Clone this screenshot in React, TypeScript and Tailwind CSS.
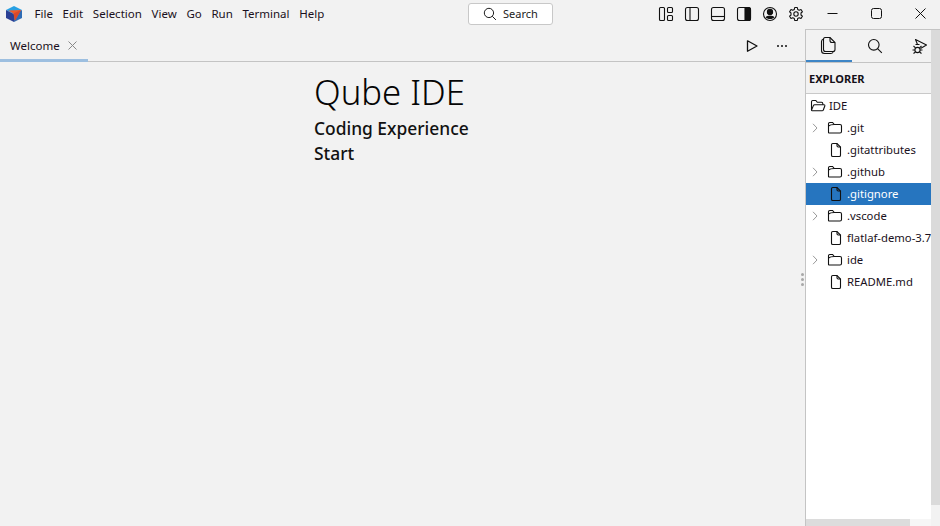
import React from "react";

const S = ({ children, w = 16, h = 16, vb = "0 0 16 16" }: { children: React.ReactNode; w?: number; h?: number; vb?: string }) => (
  <svg width={w} height={h} viewBox={vb} fill="none" stroke="#111" strokeWidth={1.1} className="block shrink-0">
    {children}
  </svg>
);

const Logo = () => (
  <svg width="18" height="18" viewBox="0 0 18 18" className="block">
    <path d="M9 1 L17 5 L9 9 L1 5 Z" fill="#27a0e3" />
    <path d="M1 5 L9 9 L9 17 L1 13 Z" fill="#2b3f94" />
    <path d="M17 5 L9 9 L9 17 L17 13 Z" fill="#2f6cb5" />
    <path d="M3.5 5.5 L16 5 L10 15.5 L8.5 8.5 Z" fill="#ef5a2a" />
    <path d="M8.5 8.5 L10 15.5 L16 5 Z" fill="#d9482a" />
  </svg>
);

const FolderIcon = () => (
  <S w={16} h={16}>
    <path d="M1.5 12.5 V3.8 C1.5 3 2 2.5 2.8 2.5 H5.6 L7.3 4.5 H13 C13.8 4.5 14.5 5.1 14.5 6 V11.5 C14.5 12.4 13.8 13 13 13 H2 C1.7 13 1.5 12.8 1.5 12.5 Z" />
    <path d="M1.5 6 C3 4.8 5 4.5 7.3 4.5" />
  </S>
);

const OpenFolderIcon = () => (
  <S w={16} h={16}>
    <path d="M1.5 12 V3.8 C1.5 3 2 2.5 2.8 2.5 H5.8 L7.3 4.3 H11.5 C12.2 4.3 12.8 4.8 12.8 5.6 V6.8" />
    <path d="M1.5 12 L3.4 7.6 C3.6 7.1 4 6.8 4.6 6.8 H14 C14.6 6.8 15 7.4 14.8 8 L13.4 11.8 C13.2 12.4 12.7 12.8 12.1 12.8 H2.3 C1.8 12.8 1.5 12.5 1.5 12 Z" />
  </S>
);

const FileIcon = () => (
  <S w={16} h={16}>
    <path d="M3.5 2.8 C3.5 2 4 1.5 4.8 1.5 H9 L12.5 5 V13.2 C12.5 14 12 14.5 11.2 14.5 H4.8 C4 14.5 3.5 14 3.5 13.2 Z" />
    <path d="M9 1.5 V3.8 C9 4.5 9.5 5 10.2 5 H12.5" />
  </S>
);

const Chevron = () => (
  <svg width="8" height="10" viewBox="0 0 8 10" fill="none" stroke="#9a9a9a" strokeWidth={1} className="block shrink-0">
    <path d="M2 0.8 L6 5 L2 9.2" />
  </svg>
);

const SearchIcon = ({ size = 16 }: { size?: number }) => (
  <svg width={size} height={size} viewBox="0 0 16 16" fill="none" stroke="#111" strokeWidth={1.1} className="block shrink-0">
    <circle cx="6.8" cy="6.8" r="5.3" />
    <path d="M10.6 10.6 L14.8 14.8" />
  </svg>
);

const menus = ["File", "Edit", "Selection", "View", "Go", "Run", "Terminal", "Help"];

type Row = { name: string; type: "root" | "folder" | "file"; selected?: boolean };
const rows: Row[] = [
  { name: "IDE", type: "root" },
  { name: ".git", type: "folder" },
  { name: ".gitattributes", type: "file" },
  { name: ".github", type: "folder" },
  { name: ".gitignore", type: "file", selected: true },
  { name: ".vscode", type: "folder" },
  { name: "flatlaf-demo-3.7.jar", type: "file" },
  { name: "ide", type: "folder" },
  { name: "README.md", type: "file" },
];

export default function App() {
  return (
    <div
      className="flex h-[526px] w-[940px] flex-col overflow-hidden bg-[#f2f2f2] text-[#111]"
      style={{ fontFamily: '"Noto Sans", sans-serif' }}
    >
      {/* Title bar */}
      <div className="flex h-[29px] shrink-0 items-center pb-[2px]">
        <div className="ml-[5px] w-[18px]"><Logo /></div>
        <div className="ml-[11px] flex w-[290px] gap-[8.7px] text-[11.5px] text-[#1a1020]">
          {menus.map((m) => (
            <span key={m} className="px-[0.5px]">{m}</span>
          ))}
        </div>
        <div className="ml-[144px] flex h-[22px] w-[85px] shrink-0 items-center rounded-[3px] border border-[#c8c8c8] bg-white pl-[14px] text-[11px]">
          <SearchIcon size={14} />
          <span className="ml-[6px] pt-[1px] text-[#222]">Search</span>
        </div>
        <div className="ml-[105px] flex items-center gap-[10px]">
          <S>
            <rect x="1.5" y="1.5" width="5" height="13" rx="1" />
            <rect x="9.5" y="1.5" width="5" height="5" rx="1" />
            <rect x="9.5" y="9.5" width="5" height="5" rx="1" />
          </S>
          <S>
            <rect x="1.5" y="1.5" width="13" height="13" rx="2" />
            <path d="M6 1.5 V14.5" />
          </S>
          <S>
            <rect x="1.5" y="1.5" width="13" height="13" rx="2" />
            <path d="M1.5 10.5 H14.5" />
          </S>
          <S>
            <rect x="1.5" y="1.5" width="13" height="13" rx="2" />
            <path d="M9 1.5 H12.5 A2 2 0 0 1 14.5 3.5 V12.5 A2 2 0 0 1 12.5 14.5 H9 Z" fill="#111" />
          </S>
          <S>
            <circle cx="8" cy="8" r="6.5" />
            <circle cx="8" cy="6" r="2.6" fill="#111" />
            <path d="M3.6 11.2 C5 9.3 11 9.3 12.4 11.2 C11 13.6 5 13.6 3.6 11.2 Z" fill="#111" stroke="none" />
          </S>
          <S>
            <circle cx="8" cy="8" r="2.2" />
            <path d="M6.7 1.5 H9.3 L9.7 3.4 L11.2 4.2 L13 3.5 L14.4 5.8 L13 7 V9 L14.4 10.2 L13 12.5 L11.2 11.8 L9.7 12.6 L9.3 14.5 H6.7 L6.3 12.6 L4.8 11.8 L3 12.5 L1.6 10.2 L3 9 V7 L1.6 5.8 L3 3.5 L4.8 4.2 L6.3 3.4 Z" strokeLinejoin="round" />
          </S>
        </div>
        <div className="ml-[23px] flex items-center gap-[33px]">
          <svg width="11" height="11" viewBox="0 0 11 11" stroke="#111" className="block"><path d="M0.5 5.5 H10.5" /></svg>
          <svg width="11" height="11" viewBox="0 0 11 11" stroke="#111" fill="none" className="block"><rect x="0.5" y="0.5" width="10" height="10" rx="2" /></svg>
          <svg width="11" height="11" viewBox="0 0 11 11" stroke="#111" className="block"><path d="M0.5 0.5 L10.5 10.5 M10.5 0.5 L0.5 10.5" /></svg>
        </div>
      </div>

      <div className="flex min-h-0 flex-1">
        {/* Editor */}
        <div className="relative min-w-0 flex-1">
          <div className="flex h-[33px] items-center border-b border-[#c4c4c4]">
            <div className="relative flex h-[33px] w-[88px] items-center pl-[10px] pt-[1px]">
              <span className="text-[11.5px] text-[#1a1020]">Welcome</span>
              <svg width="9" height="9" viewBox="0 0 9 9" stroke="#888" className="ml-[8px] block"><path d="M0.5 0.5 L8.5 8.5 M8.5 0.5 L0.5 8.5" /></svg>
              <div className="absolute bottom-0 left-0 h-[3px] w-[88px] bg-[#9dbfe0]" />
            </div>
            <div className="ml-auto mr-[18px] flex items-center gap-[18px] pt-[1px]">
              <svg width="14" height="14" viewBox="0 0 14 14" fill="none" stroke="#111" strokeWidth={1.3} className="block"><path d="M2.5 1.8 L12 7 L2.5 12.2 Z" strokeLinejoin="round" /></svg>
              <svg width="10" height="4" viewBox="0 0 10 4" fill="#111" className="block"><circle cx="1" cy="2" r="1" /><circle cx="5" cy="2" r="1" /><circle cx="9" cy="2" r="1" /></svg>
            </div>
          </div>
          <div className="pl-[314px] pt-[6px]">
            <div className="text-[34.7px] font-light leading-[48px] text-[#050505]">Qube IDE</div>
            <div className="text-[17.4px] font-medium leading-[25px]">Coding Experience</div>
            <div className="text-[17.4px] font-medium leading-[25px]">Start</div>
          </div>
          <div className="absolute right-[1px] top-[244px] flex flex-col gap-[2px]">
            <div className="h-[3px] w-[3px] rounded-full bg-[#a8a8a8]" />
            <div className="h-[3px] w-[3px] rounded-full bg-[#a8a8a8]" />
            <div className="h-[3px] w-[3px] rounded-full bg-[#a8a8a8]" />
          </div>
        </div>

        {/* Side panel */}
        <div className="flex w-[135px] shrink-0 flex-col border-l border-t border-[#c4c4c4]">
          <div className="flex min-h-0 flex-1">
            <div className="flex w-[125px] min-w-0 flex-col">
              <div className="flex h-[33px] shrink-0 items-center overflow-hidden border-b border-[#c4c4c4]">
                <div className="relative flex h-[33px] w-[46px] shrink-0 items-center justify-center">
                  <S w={18} h={18} vb="0 0 18 18">
                    <path d="M3.5 2 C3.5 1 4.2 0.5 5.5 0.5 H10 L15 5.5 V12.5 C15 13.7 14.2 14.5 13 14.5 H5.5 C4.2 14.5 3.5 13.7 3.5 12.5 Z" />
                    <path d="M10 0.5 V3.5 C10 4.8 10.7 5.5 12 5.5 H15" />
                    <path d="M3.5 2 C2 2.5 1.5 3.5 1.5 4.5 V13.5 C1.5 15.5 3 16.5 4.5 16.5 H11 C12.2 16.5 13 16 13.3 14.5" />
                  </S>
                  <div className="absolute bottom-0 left-0 h-[3px] w-[46px] bg-[#3d85c6]" />
                </div>
                <div className="flex w-[46px] shrink-0 justify-center"><SearchIcon /></div>
                <div className="flex w-[44px] shrink-0 justify-center">
                  <S w={16} h={16}>
                    <path d="M5.5 6.5 L3.5 1.5 L14.5 7 L8.5 10.5" strokeLinejoin="round" />
                    <circle cx="5.5" cy="12" r="2.6" />
                    <path d="M3.5 6.5 L7.5 6.5 M1.5 8 L3.5 9.8 M9.5 8 L7.5 9.8 M0.5 12 H2.9 M8.1 12 H10.5 M1.5 15.5 L3.5 14 M9.5 15.5 L7.5 14" />
                  </S>
                </div>
              </div>
              <div className="flex h-[31px] shrink-0 items-center border-b border-[#c9c9c9] pl-[3px] pt-[2px] text-[11px] font-bold text-[#141018]">
                EXPLORER
              </div>
              <div className="min-h-0 flex-1 overflow-hidden bg-white pt-[1px]">
                {rows.map((r) => (
                  <div
                    key={r.name}
                    className={`flex h-[22px] items-center whitespace-nowrap text-[11.3px] ${r.selected ? "bg-[#2675bf] text-white" : "text-[#1a1020]"}`}
                  >
                    {r.type === "root" && (
                      <div className="flex items-center pl-[4px]">
                        <OpenFolderIcon />
                        <span className="ml-[3px]">{r.name}</span>
                      </div>
                    )}
                    {r.type === "folder" && (
                      <div className="flex items-center pl-[5px]">
                        <Chevron />
                        <div className="ml-[8px]"><FolderIcon /></div>
                        <span className="ml-[4px] pt-[1px]">{r.name}</span>
                      </div>
                    )}
                    {r.type === "file" && (
                      <div className="flex items-center pl-[22px]">
                        <FileIcon />
                        <span className="ml-[3px] pt-[1px]">{r.name}</span>
                      </div>
                    )}
                  </div>
                ))}
              </div>
              <div className="h-[7px] shrink-0 bg-[#f6f6f6]">
                <div className="h-[7px] w-[104px] bg-[#dcdcdc]" />
              </div>
            </div>
            <div className="flex w-[9px] shrink-0 flex-col bg-[#f2f2f2]">
              <div className="h-[475px] bg-[#dadada]" />
            </div>
          </div>
        </div>
      </div>
    </div>
  );
}
